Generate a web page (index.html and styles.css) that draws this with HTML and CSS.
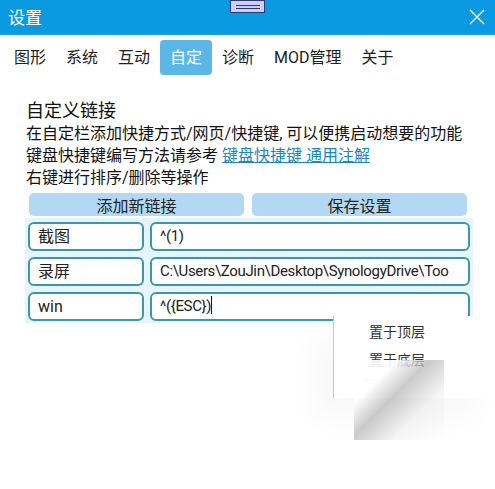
FILE: index.html
```html
<!DOCTYPE html>
<html lang="zh-CN">
<head>
  <meta charset="UTF-8">
  <title>设置</title>
  <link rel="stylesheet" href="styles.css">
</head>
<body>
  <div class="titlebar">
    <span class="title">设置</span>
    <div class="grip"><span></span><span></span></div>
    <svg class="close" width="16" height="16" viewBox="0 0 16 16">
      <path d="M1 1 L15 15 M15 1 L1 15" stroke="#fff" stroke-width="1.3" fill="none"/>
    </svg>
  </div>

  <div class="tabs">
    <div class="tab">图形</div>
    <div class="tab">系统</div>
    <div class="tab">互动</div>
    <div class="tab active">自定</div>
    <div class="tab">诊断</div>
    <div class="tab">MOD管理</div>
    <div class="tab">关于</div>
  </div>

  <div class="content">
    <h2>自定义链接</h2>
    <p>在自定栏添加快捷方式/网页/快捷键, 可以便携启动想要的功能</p>
    <p>键盘快捷键编写方法请参考 <a href="#">键盘快捷键 通用注解</a></p>
    <p>右键进行排序/删除等操作</p>

    <div class="actions">
      <button>添加新链接</button>
      <button>保存设置</button>
    </div>

    <div class="links">
      <div class="row">
        <div class="field name">截图</div>
        <div class="field value">^(1)</div>
      </div>
      <div class="row">
        <div class="field name">录屏</div>
        <div class="field value">C:\Users\ZouJin\Desktop\SynologyDrive\Too</div>
      </div>
      <div class="row">
        <div class="field name">win</div>
        <div class="field value">^({ESC})<span class="caret"></span></div>
      </div>
    </div>
  </div>

  <div class="menu">
    <div class="menu-item">置于顶层</div>
    <div class="menu-item">置于底层</div>
    <div class="menu-sep"></div>
    <div class="fade"></div>
  </div>
</body>
</html>
```

FILE: styles.css
```css
body {
  margin: 0;
  background: #fff;
  font-family: Roboto, "Noto Sans CJK SC", sans-serif;
  color: #222;
  width: 495px;
  height: 489px;
  overflow: hidden;
  position: relative;
}
.titlebar {
  height: 33px;
  background: #0a9ae2;
  border-bottom: 2px solid #1f9ccb;
  box-shadow: 0 1px 0 #d8f6ff;
  display: flex;
  align-items: center;
  padding: 0 10px 0 8px;
  position: relative;
}
.title {
  color: #fff;
  font-size: 17px;
  flex: 1;
}
.grip {
  position: absolute;
  left: 230px;
  top: 0;
  width: 33px;
  height: 11px;
  background: #c9cff7;
  border: 1px solid #2c3d6b;
  display: flex;
  flex-direction: column;
  justify-content: center;
  align-items: center;
  gap: 2px;
}
.grip span {
  width: 24px;
  height: 1px;
  background: #2c3d6b;
}
.tabs {
  display: flex;
  padding: 5px 0 0 4px;
}
.tab {
  font-size: 16px;
  height: 35px;
  line-height: 35px;
  padding: 0 10px;
  border-radius: 4px;
  color: #222;
}
.tab.active {
  background: #5bb7e5;
  color: #fff;
}
.content {
  padding: 0 0 0 26px;
}
h2 {
  font-size: 18px;
  font-weight: normal;
  margin: 24px 0 0;
  line-height: 24px;
  color: #111;
}
p {
  margin: 0;
  font-size: 16px;
  line-height: 22px;
  color: #111;
}
a {
  color: #1b86c7;
  text-decoration: underline;
}
.actions {
  display: flex;
  gap: 8px;
  margin: 4px 0 0 3px;
  width: 438px;
}
.actions button {
  flex: 1;
  height: 23px;
  border: none;
  border-radius: 5px;
  background: #b3d8f3;
  font-family: Roboto, "Noto Sans CJK SC", sans-serif;
  font-size: 16px;
  color: #222;
  padding: 0;
}
.links {
  margin: 2px 0 0 -1px;
  width: 445px;
  background: #e6f5fb;
  padding: 4px 0 2px 3px;
  display: flex;
  flex-direction: column;
  gap: 6px;
}
.row {
  display: flex;
  gap: 6px;
}
.field {
  height: 25px;
  line-height: 25px;
  border: 2px solid #3d97a9;
  border-radius: 6px;
  background: #fff;
  font-size: 16px;
  color: #222;
  padding: 0 8px;
  white-space: nowrap;
  overflow: hidden;
}
.name {
  width: 96px;
}
.value {
  width: 300px;
  font-size: 15px;
  letter-spacing: -0.35px;
}
.caret {
  display: inline-block;
  width: 1px;
  height: 18px;
  background: #111;
  vertical-align: -3px;
}
.menu {
  position: absolute;
  left: 333px;
  top: 316px;
  width: 162px;
  height: 82px;
  background: #fff;
  border-left: 1px solid #c8c8c8;
  box-shadow: -20px 20px 30px rgba(0, 0, 0, 0.03);
}
.menu-item {
  font-size: 14px;
  color: #333;
  padding-left: 35px;
  height: 28px;
  line-height: 32px;
}
.menu-sep {
  margin: 8px 0 0 29px;
  width: 10px;
  height: 1px;
  background: #bbb;
}
.fade {
  position: absolute;
  left: 20px;
  top: 44px;
  width: 90px;
  height: 80px;
  background: linear-gradient(135deg, rgba(255,255,255,0.9) 25%, rgba(180,180,180,0.7) 45%, rgba(235,235,235,0.5) 70%, rgba(255,255,255,0));
}
```
